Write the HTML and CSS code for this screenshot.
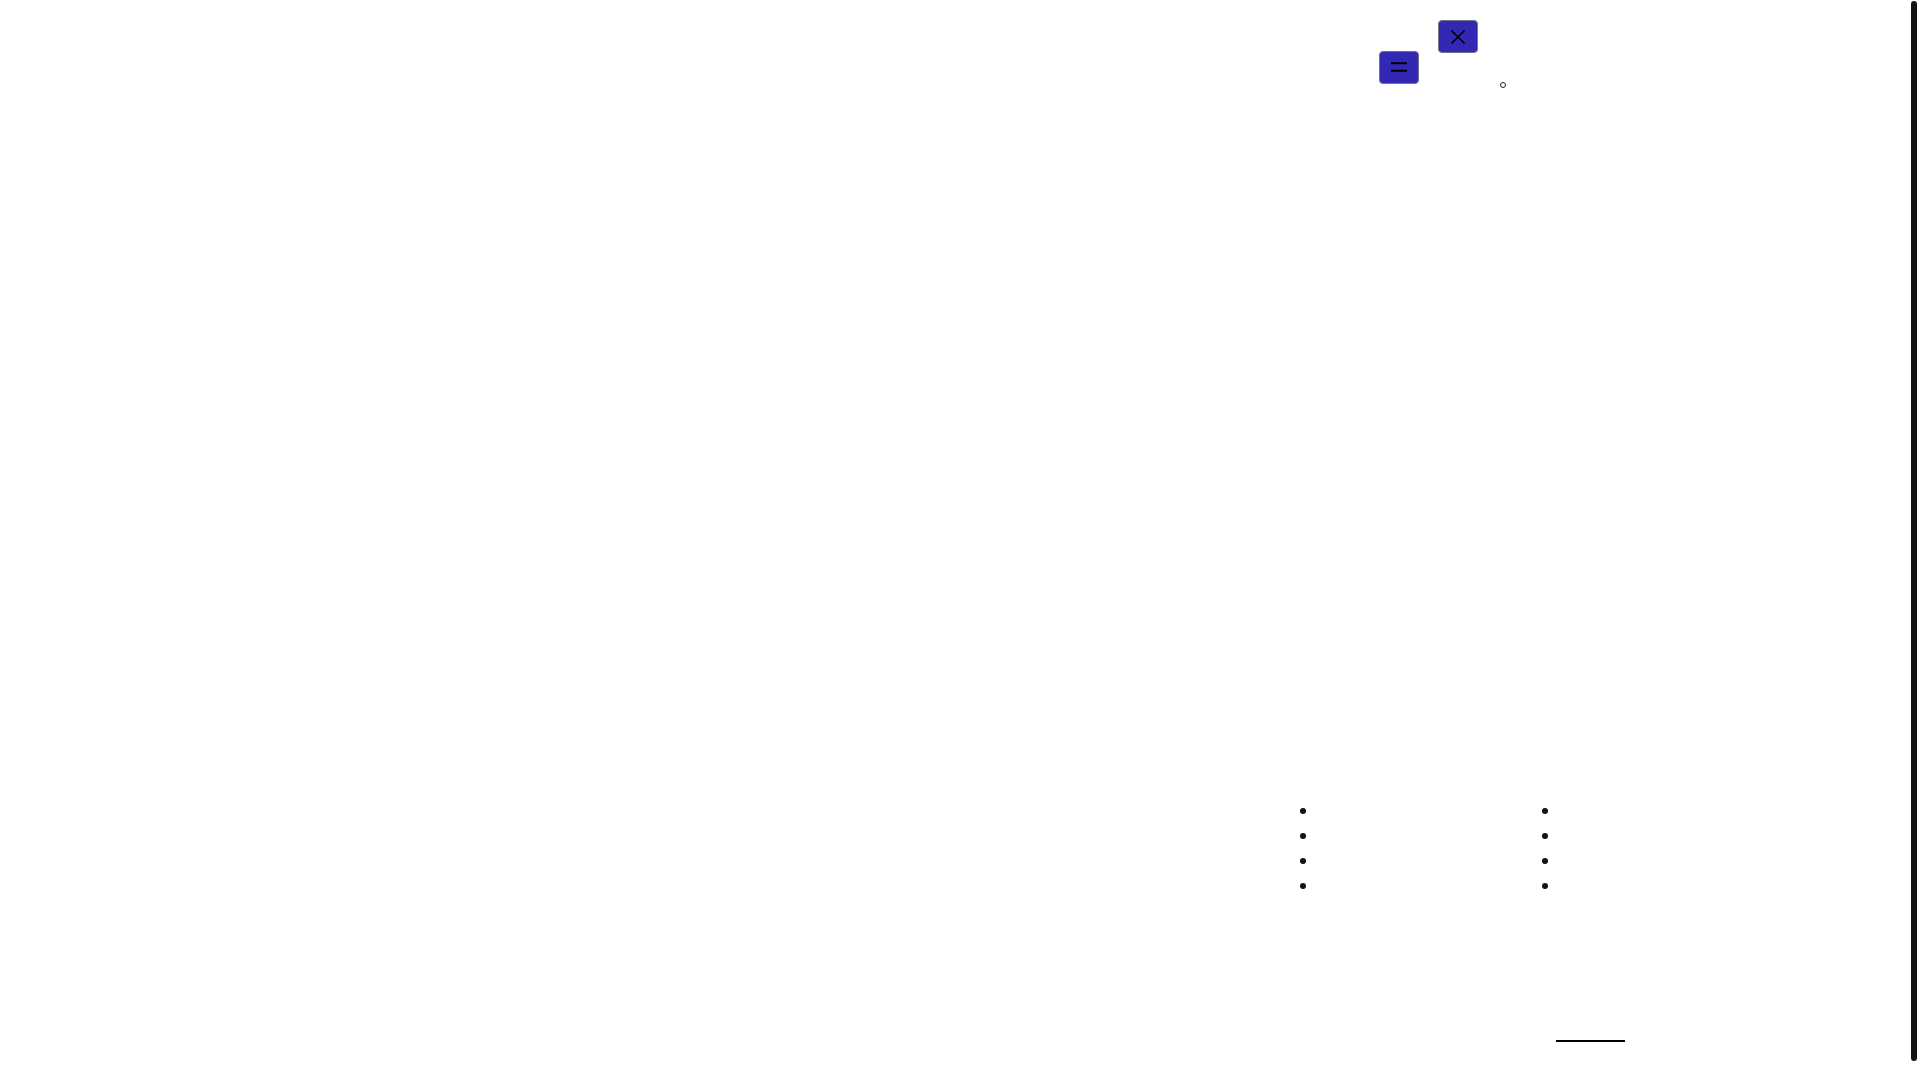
FILE: index.html
```html
<!DOCTYPE html>
<html lang="en">
<head>
<meta charset="utf-8">
<title>Page</title>
<link rel="stylesheet" href="styles.css">
</head>
<body>
<div class="page">
  <header class="top">
    <button class="toggle toggle-open" type="button" aria-label="Open menu">
      <svg width="18" height="12" viewBox="0 0 18 12"><path d="M1 1.2h16M1 8.8h16" stroke="#000" stroke-width="2" fill="none"/></svg>
    </button>
    <nav class="nav">
      <button class="toggle toggle-close" type="button" aria-label="Close menu">
        <svg width="16" height="16" viewBox="0 0 16 16"><path d="M1.5 1.5l13 13M14.5 1.5l-13 13" stroke="#000" stroke-width="1.6" fill="none"/></svg>
      </button>
      <ul class="nav-list">
        <li class="nav-item"></li>
      </ul>
    </nav>
  </header>
  <main class="main"></main>
  <footer class="footer">
    <div class="footer-cols">
      <ul class="footer-list">
        <li class="footer-item"></li>
        <li class="footer-item"></li>
        <li class="footer-item"></li>
        <li class="footer-item"></li>
      </ul>
      <ul class="footer-list">
        <li class="footer-item"></li>
        <li class="footer-item"></li>
        <li class="footer-item"></li>
        <li class="footer-item"></li>
      </ul>
    </div>
    <div class="footer-bottom">
      <span class="footer-link"></span>
    </div>
  </footer>
</div>
<div class="scroll-thumb" aria-hidden="true"></div>
</body>
</html>
```
FILE: styles.css
```css
html {
  background: #fff;
}
body {
  margin: 0;
  font-family: "Liberation Sans", Arial, sans-serif;
  color: #000;
}
.page {
  display: flex;
  flex-direction: column;
  height: 1080px;
  overflow: hidden;
}
.top {
  display: flex;
  align-items: flex-start;
  height: 100px;
  flex-shrink: 0;
  padding-left: 1379px;
}
.toggle {
  box-sizing: border-box;
  width: 40px;
  height: 33px;
  padding: 0;
  margin: 0;
  display: flex;
  align-items: center;
  justify-content: center;
  background: #3328b4;
  border: 1.5px solid #76748a;
  border-radius: 4px;
}
.toggle svg {
  display: block;
}
.toggle-open {
  margin-top: 51px;
}
.nav {
  display: flex;
  flex-direction: column;
  margin-left: 19px;
}
.toggle-close {
  margin-top: 20px;
}
.nav-list {
  list-style: none;
  margin: 29px 0 0;
  padding: 0 0 0 62px;
}
.nav-item {
  width: 6px;
  height: 6px;
  box-sizing: border-box;
  border: 1px solid #222;
  border-radius: 50%;
}
.main {
  height: 698px;
  flex-shrink: 0;
}
.footer {
  display: flex;
  flex-direction: column;
}
.footer-cols {
  display: flex;
  padding-left: 1300px;
}
.footer-list {
  list-style: none;
  margin: 0;
  padding: 0;
  width: 242px;
}
.footer-item {
  height: 25px;
  display: flex;
  align-items: center;
}
.footer-item::before {
  content: "";
  width: 6px;
  height: 6px;
  border-radius: 50%;
  background: #111;
}
.footer-bottom {
  padding-left: 1556px;
  margin-top: 142px;
}
.footer-link {
  display: block;
  width: 69px;
  height: 0;
  border-bottom: 2px solid #000;
}
.scroll-thumb {
  position: fixed;
  top: 1px;
  right: 3px;
  width: 6px;
  height: 1060px;
  border-radius: 3px;
  background: #111;
}
```
